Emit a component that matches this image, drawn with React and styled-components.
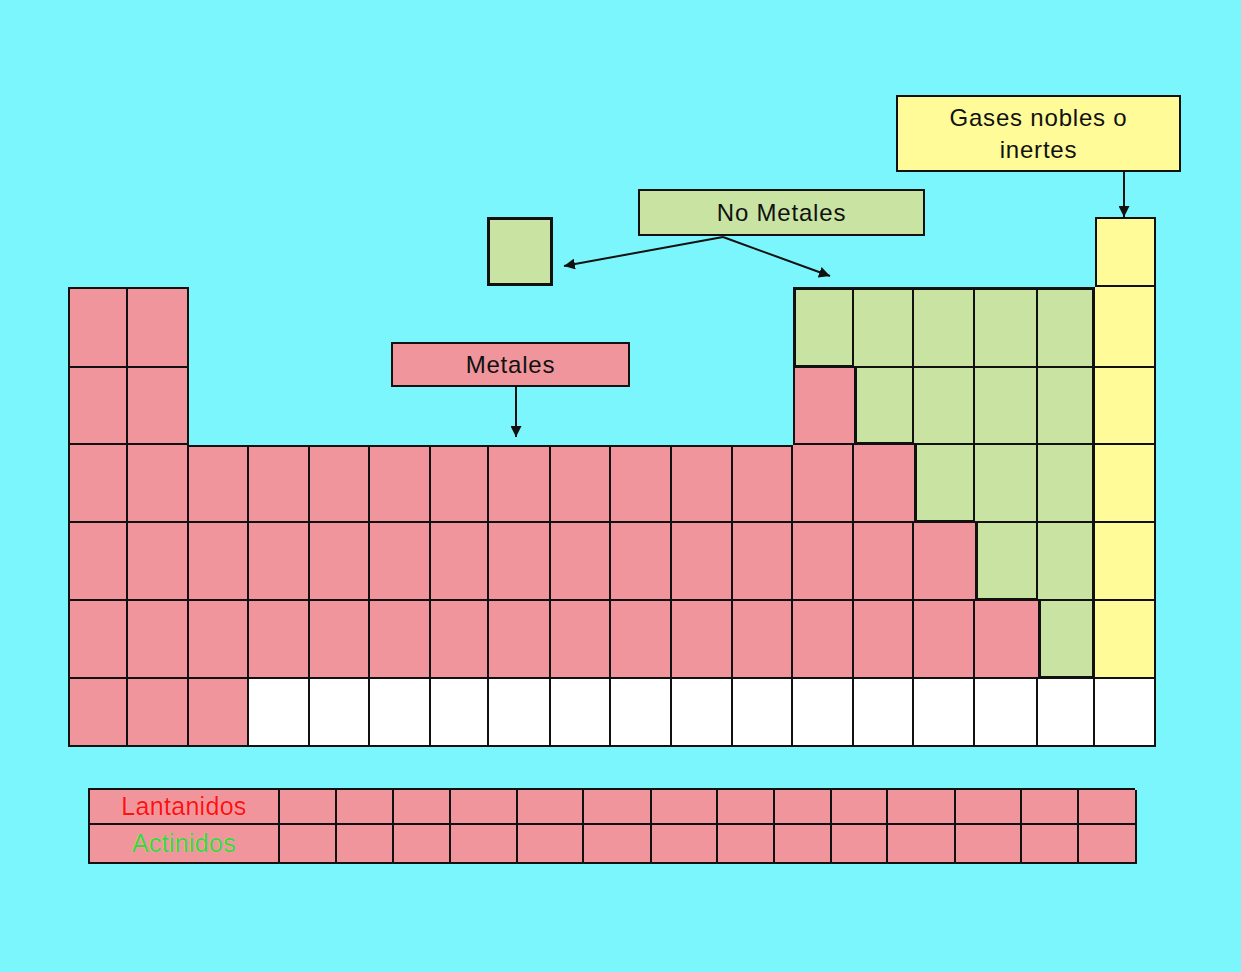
import React from 'react'
import styled, { createGlobalStyle } from 'styled-components'

const COLORS = {
    p: '#EF959B',
    g: '#C9E4A2',
    y: '#FFFB98',
    w: '#FFFFFF',
}

// main table: '.' empty, p metal, g non-metal, y noble gas, w blank
const ROWS = [
    '.................y',
    'pp..........gggggy',
    'pp..........pggggy',
    'ppppppppppppppgggy',
    'pppppppppppppppggy',
    'ppppppppppppppppgy',
    'pppwwwwwwwwwwwwwww',
]

const COL_WIDTHS = [60, 61, 60, 61, 60, 61, 58, 62, 60, 61, 61, 60, 61, 60, 61, 63, 57, 61]
const ROW_HEIGHTS = [70, 81, 77, 78, 78, 78, 68]
const SERIES_WIDTHS = [190, 57, 57, 57, 67, 66, 68, 66, 57, 57, 56, 68, 66, 57, 58]

const LINE = 2
const THICK = 3

const GlobalStyle = createGlobalStyle`
    html, body {
        margin: 0;
        background: #7BF6FC;
    }
    body {
        font-family: "Liberation Sans", Arial, sans-serif;
    }
`

const Page = styled.div`
    position: relative;
    width: 1241px;
    height: 972px;
    padding: 217px 0 0 68px;
    box-sizing: border-box;
    overflow: hidden;
`

const Table = styled.div`
    display: grid;
    grid-template-columns: ${COL_WIDTHS.map(w => w + 'px').join(' ')};
    grid-template-rows: ${ROW_HEIGHTS.map(h => h + 'px').join(' ')};
    width: 1088px;
`

const Cell = styled.div`
    box-sizing: border-box;
    background: ${p => p.$bg};
    border-style: solid;
    border-color: #111;
    border-width: ${p => `${p.$t}px ${p.$r}px ${p.$b}px ${p.$l}px`};
`

const Sample = styled.div`
    box-sizing: border-box;
    margin: 0 -2px 1px -2px;
    background: ${COLORS.g};
    border: 3px solid #111;
`

const SeriesTable = styled.div`
    display: grid;
    grid-template-columns: ${SERIES_WIDTHS.map(w => w + 'px').join(' ')};
    grid-template-rows: 35px 39px;
    width: 1047px;
    margin: 41px 0 0 20px;
    box-sizing: border-box;
    border-top: ${LINE}px solid #111;
    border-left: ${LINE}px solid #111;
`

const SeriesCell = styled.div`
    box-sizing: border-box;
    display: flex;
    align-items: center;
    justify-content: center;
    background: ${COLORS.p};
    border-right: ${LINE}px solid #111;
    border-bottom: ${LINE}px solid #111;
    color: ${p => p.$color || 'inherit'};
    font-size: 25px;
    letter-spacing: 0.3px;
    text-shadow: 0 0 1px rgba(255, 255, 255, 0.6);
`

const Callout = styled.div`
    position: absolute;
    top: ${p => p.$top}px;
    left: ${p => p.$left}px;
    width: ${p => p.$w}px;
    height: ${p => p.$h}px;
    box-sizing: border-box;
    display: flex;
    align-items: center;
    justify-content: center;
    text-align: center;
    background: ${p => p.$bg};
    border: 2px solid #111;
    color: #111;
    font-size: 24px;
    line-height: 32px;
    letter-spacing: 0.8px;
`

const Arrows = styled.svg`
    position: absolute;
    top: 0;
    left: 0;
    pointer-events: none;
`

const kindAt = (r, c) => {
    if (r < 0 || r >= ROWS.length || c < 0 || c >= 18) return '.'
    return ROWS[r][c]
}

// border width of one side of a cell, with thick lines round the non-metals
const side = (kind, other, leading) => {
    if (kind === 'g' && other !== 'g') return THICK
    if (kind !== 'g' && other === 'g') return 0
    if (!leading) return LINE
    return other === '.' ? LINE : 0
}

const PeriodicTable = () => {
    const cells = []
    ROWS.forEach((row, r) => {
        row.split('').forEach((kind, c) => {
            const area = { gridRow: r + 1, gridColumn: c + 1 }
            if (r === 0 && c === 7) {
                cells.push(<Sample key={`${r}-${c}`} style={area} />)
                return
            }
            if (kind === '.') return
            cells.push(
                <Cell
                    key={`${r}-${c}`}
                    style={area}
                    $bg={COLORS[kind]}
                    $t={side(kind, kindAt(r - 1, c), true)}
                    $l={side(kind, kindAt(r, c - 1), true)}
                    $r={side(kind, kindAt(r, c + 1), false)}
                    $b={side(kind, kindAt(r + 1, c), false)}
                />
            )
        })
    })
    return <Table>{cells}</Table>
}

const Series = () => (
    <SeriesTable>
        {[['Lantanidos', '#FF1010'], ['Actinidos', '#3FD43A']].map(([name, color]) => (
            <React.Fragment key={name}>
                <SeriesCell $color={color}>{name}</SeriesCell>
                {SERIES_WIDTHS.slice(1).map((_, i) => (
                    <SeriesCell key={i} />
                ))}
            </React.Fragment>
        ))}
    </SeriesTable>
)

const App = () => {
    return (
        <>
            <GlobalStyle />
            <Page>
                <PeriodicTable />
                <Series />

                <Callout $top={95} $left={896} $w={285} $h={77} $bg={COLORS.y}>
                    Gases nobles o<br />inertes
                </Callout>
                <Callout $top={189} $left={638} $w={287} $h={47} $bg={COLORS.g}>
                    No Metales
                </Callout>
                <Callout $top={342} $left={391} $w={239} $h={45} $bg={COLORS.p}>
                    Metales
                </Callout>

                <Arrows width="1241" height="972" viewBox="0 0 1241 972">
                    <defs>
                        <marker
                            id="head"
                            viewBox="0 0 10 10"
                            refX="10"
                            refY="5"
                            markerWidth="11"
                            markerHeight="11"
                            markerUnits="userSpaceOnUse"
                            orient="auto"
                        >
                            <path d="M0 0 L10 5 L0 10 Z" fill="#111" />
                        </marker>
                    </defs>
                    <g stroke="#111" strokeWidth="2" fill="none">
                        <line x1="1124" y1="172" x2="1124" y2="217" markerEnd="url(#head)" />
                        <line x1="516" y1="387" x2="516" y2="437" markerEnd="url(#head)" />
                        <line x1="723" y1="237" x2="564" y2="266" markerEnd="url(#head)" />
                        <line x1="723" y1="237" x2="830" y2="276" markerEnd="url(#head)" />
                    </g>
                </Arrows>
            </Page>
        </>
    )
}

export default App
